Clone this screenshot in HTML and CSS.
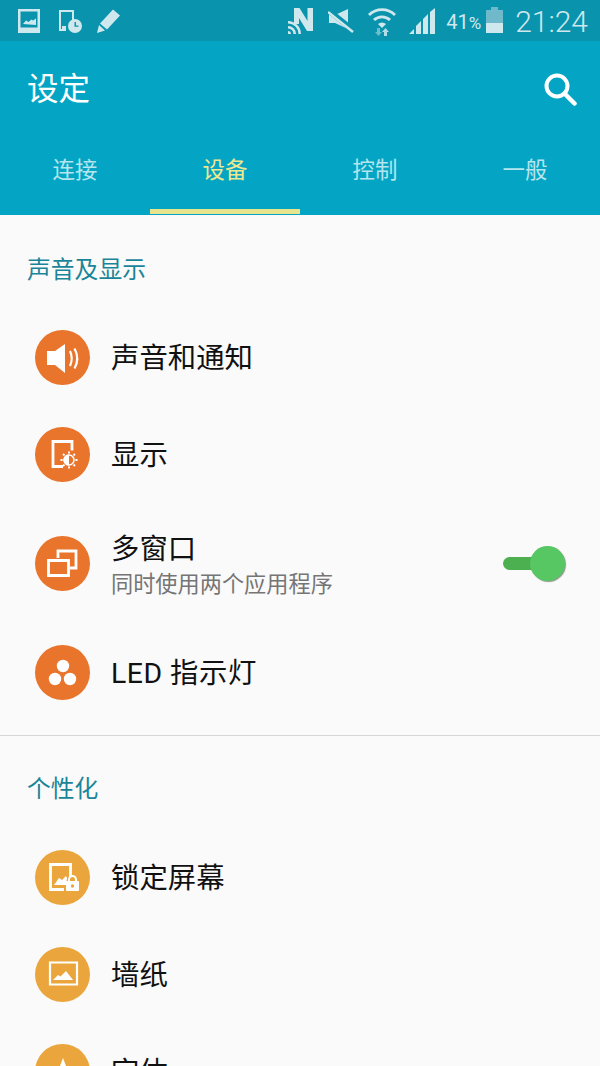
FILE: index.html
```html
<!DOCTYPE html>
<html lang="zh-CN">
<head>
    <meta charset="UTF-8">
    <meta name="viewport" content="width=device-width, initial-scale=1.0">
    <title>设定</title>
    <link rel="stylesheet" href="styles.css">
</head>
<body>
    <div class="screen">
        <div class="status-bar">
            <div class="status-left">
                <svg class="ic ic-photo" width="24" height="24" viewBox="0 0 24 24"><path fill-rule="evenodd" d="M1 0h22v24H1zM3.500 2.500v16h17v-16z"/><path d="M6 15l3-3.500 2.500 1.500 3-2.500 1.500 1 3-2v6.500z"/></svg>
                <svg class="ic" width="26" height="26" viewBox="0 0 26 26"><path d="M2 2h15v10h-2V4H4v17h5v2H2z"/><path d="M5 18h4v3H5z"/><circle cx="18" cy="18" r="7"/><path d="M17.500 14v4.800h4v-1.300h-2.500V14z" fill="#0a93ad"/></svg>
                <svg class="ic" width="26" height="26" viewBox="0 0 26 26"><path d="M17 1.500l7 6-13 14-7-6zM3 17l6 5.500-8 2.500z"/></svg>
            </div>
            <div class="status-right">
                <svg class="ic ic-n" width="26" height="28" viewBox="0 0 26 28"><path d="M6 1h5.500l8 13V1H25v23h-6L11 11v6H6z"/><path d="M0 14a13 13 0 0 1 13 13h-2.500A10.500 10.500 0 0 0 0 16.500zM0 19a8 8 0 0 1 8 8H5.500A5.500 5.500 0 0 0 0 21.500zM0 24a3 3 0 0 1 3 3H0z"/></svg>
                <svg class="ic ic-mute" width="26" height="24" viewBox="0 0 26 24"><path d="M1 6h6l13-6v20L7 14H1z"/><path d="M0 1l25 20" stroke="#0a93ad" stroke-width="5.500"/><path d="M0 3l25 20" stroke="#cfe8ee" stroke-width="2.500"/></svg>
                <svg class="ic ic-wifi" width="28" height="30" viewBox="0 0 28 30"><path d="M0 8a20 20 0 0 1 28 0l-2 2a17 17 0 0 0-24 0zM5 13a13 13 0 0 1 18 0l-2 2a10 10 0 0 0-14 0zM10 18a6 6 0 0 1 8 0l-4 4z"/><path d="M9 22h3v4h2l-3.500 4-3.500-4h2z" opacity=".5"/><path d="M16 30v-4h-2l3.500-4 3.500 4h-2v4z" opacity=".85"/></svg>
                <svg class="ic ic-signal" width="27" height="26" viewBox="0 0 27 26"><path d="M0 26l5-5v5zM7 26v-8l5-5v13zM14 26V11l5-5v20zM21 26V4l5-4v26z"/></svg>
                <span class="battery-pct">41<span class="pct">%</span></span>
                <span class="battery"><span class="battery-cap"></span><span class="battery-fill"></span></span>
                <span class="clock">21:24</span>
            </div>
        </div>

        <header class="app-header">
            <div class="title-row">
                <h1>设定</h1>
                <svg class="search" width="34" height="34" viewBox="0 0 34 34"><circle cx="14" cy="14" r="10.500" fill="none" stroke="#fff" stroke-width="4"/><path d="M21.500 21.500l10 10" stroke="#fff" stroke-width="4.500" stroke-linecap="round"/></svg>
            </div>
            <nav class="tabs">
                <div class="tab">连接</div>
                <div class="tab active">设备</div>
                <div class="tab">控制</div>
                <div class="tab">一般</div>
            </nav>
        </header>

        <section class="section first">
            <h2>声音及显示</h2>
            <div class="row">
                <span class="icon orange">
                    <svg width="55" height="55" viewBox="0 0 55 55"><path d="M12 21h8l10-7v29l-10-8h-8z" fill="#fff"/><path d="M35 21q3.500 7.500 0 15M39.500 18.500q5.500 10 0 20" fill="none" stroke="#fff" stroke-width="2.200"/></svg>
                </span>
                <span class="label">声音和通知</span>
            </div>
            <div class="row">
                <span class="icon orange">
                    <svg width="55" height="55" viewBox="0 0 55 55"><path d="M28 39.500H18V14.500h19v9" fill="none" stroke="#fff" stroke-width="2.800"/><path d="M34 24.500v17M25.500 33h17M28 27l12 12M40 27L28 39" stroke="#fff" stroke-width="1.800"/><circle cx="34" cy="33" r="6.500" fill="#e9752d"/><circle cx="34" cy="33" r="5" fill="none" stroke="#fff" stroke-width="1.500"/><path d="M34 27.500a5.500 5.500 0 0 0 0 11z" fill="#fff"/></svg>
                </span>
                <span class="label">显示</span>
            </div>
            <div class="row tall">
                <span class="icon orange">
                    <svg width="55" height="55" viewBox="0 0 55 55"><path d="M23 22v-7h18v17h-6" fill="none" stroke="#fff" stroke-width="2.800"/><path d="M13.500 24.500h20v15h-20z" fill="none" stroke="#fff" stroke-width="2.800"/></svg>
                </span>
                <div class="row-text">
                    <span class="label">多窗口</span>
                    <span class="sub">同时使用两个应用程序</span>
                </div>
                <span class="toggle"><span class="toggle-knob"></span></span>
            </div>
            <div class="row">
                <span class="icon orange">
                    <svg width="55" height="55" viewBox="0 0 55 55" fill="#fff"><circle cx="28" cy="21" r="6.200"/><circle cx="20" cy="34" r="6.200"/><circle cx="35" cy="34" r="6.200"/></svg>
                </span>
                <span class="label led">LED 指示灯</span>
            </div>
        </section>

        <section class="section second">
            <h2>个性化</h2>
            <div class="row">
                <span class="icon amber">
                    <svg width="55" height="55" viewBox="0 0 55 55"><path d="M29 39.500H15.500v-25h20V27" fill="none" stroke="#fff" stroke-width="2.800"/><path d="M19 35l5-7 3 2 4-4 1 2-1 7z" fill="#fff"/><rect x="31" y="31" width="13" height="10" rx="1" fill="#fff"/><path d="M34 31v-1.500a3.500 3.500 0 0 1 7 0V31" fill="none" stroke="#fff" stroke-width="2"/><circle cx="37.500" cy="36" r="1.700" fill="#eaa63d"/></svg>
                </span>
                <span class="label">锁定屏幕</span>
            </div>
            <div class="row">
                <span class="icon amber">
                    <svg width="55" height="55" viewBox="0 0 55 55"><path d="M15 15.500h27v22H15z" fill="none" stroke="#fff" stroke-width="2.200"/><path d="M18 33l5-5 2.500 1.500L31 24l7 9z" fill="#fff"/></svg>
                </span>
                <span class="label">墙纸</span>
            </div>
            <div class="row">
                <span class="icon amber">
                    <svg width="55" height="55" viewBox="0 0 55 55"><path d="M28 14l9 24H19z" fill="#fff"/></svg>
                </span>
                <span class="label">字体</span>
            </div>
        </section>
    </div>
</body>
</html>
```

FILE: styles.css
```css
body {
    margin: 0;
    padding: 0;
    background-color: #fafafa;
    font-family: 'Roboto', 'Noto Sans CJK SC', sans-serif;
}

.screen {
    width: 600px;
    height: 1066px;
    overflow: hidden;
}

.status-bar {
    height: 41px;
    background-color: #0a93ad;
    display: flex;
    justify-content: space-between;
    align-items: center;
    padding: 0 12px 0 17px;
    color: #cfe8ee;
}

.status-left,
.status-right {
    display: flex;
    align-items: center;
}

.status-left {
    gap: 13px;
}

.ic {
    fill: #cfe8ee;
    flex: none;
}

.ic-photo {
    margin-right: 3px;
}

.ic-n {
    margin-right: 14px;
}

.ic-mute {
    margin-right: 14px;
}

.ic-wifi {
    margin-right: 13px;
}

.ic-signal {
    margin-right: 10px;
}

.battery-pct {
    font-size: 20px;
    margin: 2px 5px 0 0;
}

.pct {
    font-size: 17px;
}

.battery {
    width: 17px;
    height: 23px;
    margin: 2px 12px 0 0;
    background-color: #6fb9cb;
    position: relative;
    display: block;
}

.battery-cap {
    position: absolute;
    top: -3px;
    left: 5px;
    width: 7px;
    height: 3px;
    background-color: #6fb9cb;
}

.battery-fill {
    position: absolute;
    left: 0;
    right: 0;
    bottom: 0;
    height: 10px;
    background-color: #cfe8ee;
}

.clock {
    font-size: 30px;
    font-weight: 300;
    margin-top: 2px;
}

.app-header {
    height: 174px;
    background-color: #04a5c4;
    color: #fff;
    display: flex;
    flex-direction: column;
}

.title-row {
    height: 96px;
    padding: 0 23px 0 27px;
    display: flex;
    justify-content: space-between;
    align-items: center;
}

h1 {
    margin: 0 0 6px;
    font-size: 31.500px;
    font-weight: 400;
}

.tabs {
    display: flex;
    flex: 1;
}

.tab {
    width: 150px;
    box-sizing: border-box;
    padding-bottom: 11px;
    display: flex;
    align-items: center;
    justify-content: center;
    font-size: 22.400px;
    color: #b5e5ee;
    border-bottom: 5px solid transparent;
    margin-bottom: 1px;
}

.tab.active {
    color: #eee88f;
    border-bottom-color: #e6e58e;
}

.section {
    padding: 0 0 0 35px;
}

.section.first {
    border-bottom: 1px solid #d6d6d6;
    padding-bottom: 14px;
}

h2 {
    margin: 0 0 0 -8px;
    height: 94px;
    line-height: 110px;
    font-size: 23.800px;
    font-weight: 400;
    color: #1a8598;
}

.section.second h2 {
    height: 93px;
    line-height: 106px;
}

.row {
    height: 97px;
    display: flex;
    align-items: center;
}

.row.tall {
    height: 121px;
}

.icon {
    width: 55px;
    height: 55px;
    border-radius: 50%;
    flex: none;
    margin-right: 21px;
}

.icon svg {
    display: block;
}

.orange {
    background-color: #e9752d;
}

.amber {
    background-color: #eaa63d;
}

.label {
    font-size: 28.400px;
    color: #111;
    margin-bottom: 5px;
}

.label.led {
    letter-spacing: 0.5px;
    margin-bottom: 4px;
}

.row-text {
    display: flex;
    flex-direction: column;
    flex: 1;
    margin-bottom: 3px;
}

.row-text .label {
    margin-bottom: -1px;
}

.sub {
    font-size: 22.200px;
    color: #757575;
}

.toggle {
    width: 60px;
    height: 13px;
    margin-right: 37px;
    background-color: #4caf50;
    border-radius: 7px;
    position: relative;
    display: block;
}

.toggle-knob {
    position: absolute;
    right: -2px;
    top: -11px;
    width: 35px;
    height: 35px;
    border-radius: 50%;
    background-color: #56c763;
    box-shadow: 1px 1px 1px #8a9a8c;
}
```
